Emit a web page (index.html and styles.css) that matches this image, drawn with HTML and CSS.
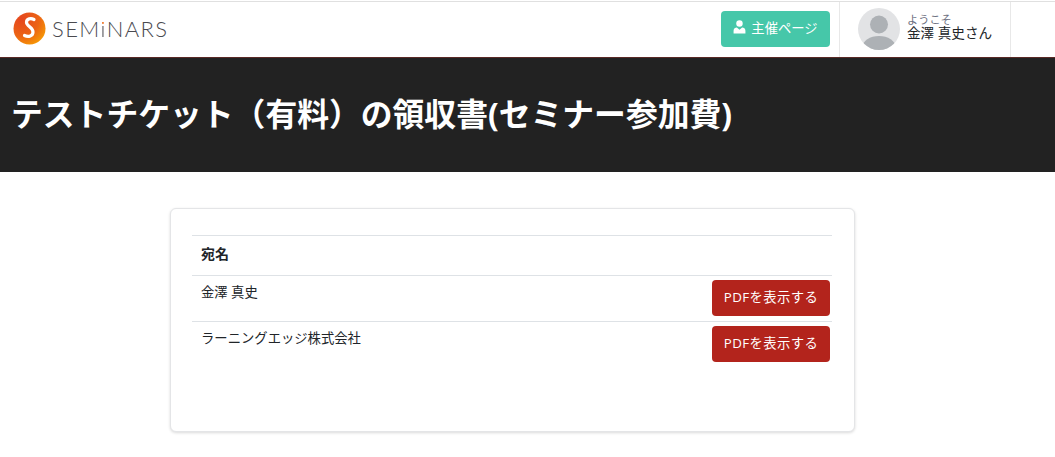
FILE: index.html
```html
<!DOCTYPE html>
<html lang="ja">
<head>
    <meta charset="UTF-8">
    <meta name="viewport" content="width=device-width, initial-scale=1.0">
    <title>領収書 - SEMINARS</title>
    <link rel="stylesheet" href="styles.css">
</head>
<body>
    <header class="site-header">
        <a href="#" class="logo">
            <span class="logo-mark">
                <svg width="33" height="33" viewBox="0 0 33 33">
                    <defs>
                        <radialGradient id="logo-grad" cx="0.25" cy="0.2" r="1">
                            <stop offset="0" stop-color="#e5461f"/>
                            <stop offset="0.55" stop-color="#ec6414"/>
                            <stop offset="1" stop-color="#f9a800"/>
                        </radialGradient>
                    </defs>
                    <circle cx="16.5" cy="16.5" r="16" fill="url(#logo-grad)"/>
                    <path d="M21 7.500c-3-1.600-7.500-1-7.500 2.800 0 4.200 6.500 5 6.500 9.700 0 4-4.500 5.500-8.500 3.500" fill="none" stroke="#fff" stroke-width="3.200" stroke-linecap="round"/>
                </svg>
            </span>
            <span class="logo-text">SEM<span class="logo-i">i</span>NARS</span>
        </a>
        <div class="header-right">
            <a href="#" class="host-btn">
                <svg width="13" height="14" viewBox="0 0 12 13"><circle cx="6" cy="3.300" r="3" fill="#fff"/><path d="M0.500 12.500v-2.500c0-2 1.500-3 3-3l2.500 2 2.500-2c1.500 0 3 1 3 3v2.500z" fill="#fff"/></svg>
                主催ページ
            </a>
            <div class="user-box">
                <svg class="avatar" width="42" height="42" viewBox="0 0 42 42">
                    <defs><clipPath id="avatar-clip"><circle cx="21" cy="21" r="21"/></clipPath></defs>
                    <circle cx="21" cy="21" r="21" fill="#e2e3e5"/>
                    <g clip-path="url(#avatar-clip)" fill="#adb1b5">
                        <circle cx="21" cy="16.500" r="9"/>
                        <ellipse cx="21" cy="39" rx="16.500" ry="11"/>
                    </g>
                </svg>
                <div class="user-text">
                    <span class="welcome">ようこそ</span>
                    <span class="user-name">金澤 真史さん</span>
                </div>
            </div>
        </div>
    </header>

    <section class="page-title">
        <h1>テストチケット（有料）の領収書(セミナー参加費)</h1>
    </section>

    <main class="content">
        <div class="card">
            <table class="receipt-table">
                <thead>
                    <tr><th colspan="2">宛名</th></tr>
                </thead>
                <tbody>
                    <tr>
                        <td>金澤 真史</td>
                        <td class="action"><a href="#" class="pdf-btn">PDFを表示する</a></td>
                    </tr>
                    <tr>
                        <td>ラーニングエッジ株式会社</td>
                        <td class="action"><a href="#" class="pdf-btn">PDFを表示する</a></td>
                    </tr>
                </tbody>
            </table>
        </div>
    </main>
</body>
</html>
```

FILE: styles.css
```css
/* General Styles */
body {
    margin: 0;
    background-color: #fff;
    color: #212529;
    font-family: "Open Sans", "Noto Sans CJK JP", sans-serif;
    font-size: 13.33px;
}
a {
    text-decoration: none;
}

/* Header */
.site-header {
    display: flex;
    justify-content: space-between;
    box-sizing: border-box;
    height: 56px;
    margin-top: 1px;
    border-top: 1px solid #e0e0e0;
    background-color: #fff;
}
.logo {
    display: flex;
    align-items: center;
    gap: 6px;
    padding-left: 13px;
    padding-bottom: 2px;
}
.logo-mark {
    display: flex;
}
.logo-text {
    color: #4a4a4f;
    font-family: "Lato", sans-serif;
    font-weight: 300;
    font-size: 22px;
    letter-spacing: 1.4px;
}
.logo-i {
    color: transparent;
    background: linear-gradient(#ee6a12 42%, #4a4a4f 42%);
    -webkit-background-clip: text;
    background-clip: text;
}
.header-right {
    display: flex;
    align-items: center;
    padding-right: 44px;
}
.host-btn {
    display: flex;
    align-items: center;
    justify-content: center;
    gap: 5px;
    box-sizing: border-box;
    width: 109px;
    height: 36px;
    margin-right: 9px;
    margin-bottom: 2px;
    padding-bottom: 3px;
    border-radius: 4px;
    background-color: #46c7a9;
    color: #fff;
}
.user-box {
    display: flex;
    align-items: center;
    gap: 7px;
    box-sizing: border-box;
    width: 172px;
    height: 100%;
    padding-left: 18px;
    padding-bottom: 2px;
    border-left: 1px solid #e8e8e8;
    border-right: 1px solid #e8e8e8;
}
.avatar {
    flex: none;
}
.user-text {
    display: flex;
    flex-direction: column;
    line-height: 13px;
    padding-bottom: 4px;
}
.welcome {
    color: #6c6f80;
    font-size: 11.2px;
    line-height: 12px;
}
.user-name {
    color: #212529;
    font-size: 13.6px;
}

/* Title */
.page-title {
    display: flex;
    align-items: center;
    box-sizing: border-box;
    height: 115px;
    padding: 0 11px 7px;
    border-top: 1px solid #5a2a26;
    background-color: #222;
}
.page-title h1 {
    margin: 0;
    color: #fff;
    font-size: 31.8px;
    font-weight: 700;
}

/* Card */
.content {
    display: flex;
    justify-content: center;
    padding-top: 36px;
    padding-right: 30px;
    padding-bottom: 25px;
}
.card {
    box-sizing: border-box;
    width: 685px;
    height: 224px;
    padding: 27px 22px 27px 21px;
    background-color: #fff;
    border: 1px solid #e4e5e7;
    border-radius: 6px;
    box-shadow: 0 1px 3px rgba(0, 0, 0, 0.15);
}
.receipt-table {
    width: 100%;
    border-collapse: collapse;
    margin-top: -1px;
}
.receipt-table th {
    height: 40px;
    padding: 0 9px 5px;
    box-sizing: border-box;
    border-top: 1px solid #dee2e6;
    border-bottom: 1px solid #dee2e6;
    text-align: left;
    font-size: 14px;
    font-weight: 700;
}
.receipt-table td {
    height: 46px;
    box-sizing: border-box;
    padding: 6px 9px 0;
    border-bottom: 1px solid #dee2e6;
    vertical-align: top;
}
.receipt-table tbody tr:last-child td {
    border-bottom: none;
}
.receipt-table td.action {
    padding: 4px 2px 0 0;
}
.pdf-btn {
    display: flex;
    align-items: center;
    justify-content: center;
    box-sizing: border-box;
    width: 118px;
    height: 36px;
    margin-left: auto;
    padding-bottom: 3px;
    border-radius: 4px;
    background-color: #b3241c;
    color: #fff;
    letter-spacing: 0.4px;
}
```
